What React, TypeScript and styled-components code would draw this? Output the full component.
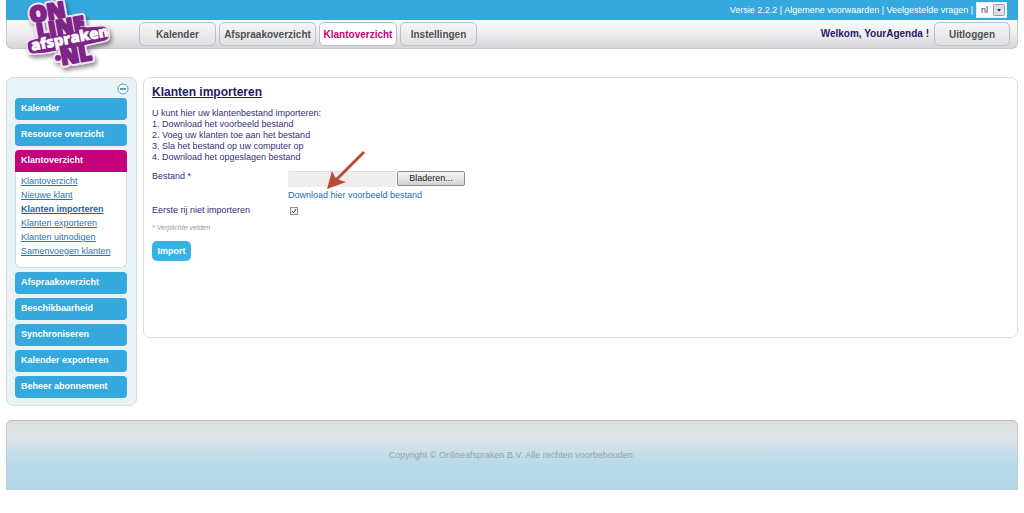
import React from "react";
import styled, { createGlobalStyle, css } from "styled-components";

const GlobalStyle = createGlobalStyle`
  *, *::before, *::after { box-sizing: border-box; }
  body {
    margin: 0;
    background: #fff;
    color: #343078;
    font-family: "Liberation Sans", Arial, Helvetica, sans-serif;
    font-size: 9px;
    line-height: 11px;
  }
  button, input, select { font-family: inherit; margin: 0; }
`;

const Page = styled.div`
  padding: 0 6px;
`;

const Header = styled.header`
  position: relative;
  margin-bottom: 28px;
`;

const TopBar = styled.div`
  display: flex;
  justify-content: flex-end;
  align-items: center;
  gap: 3px;
  height: 20px;
  padding-right: 11px;
  background: #35a9dd;
  color: #fff;
`;

const TopLinks = styled.div`
  white-space: pre;
`;

const TopLink = styled.a`
  color: inherit;
  text-decoration: none;
`;

const LanguageBox = styled.div`
  position: relative;
  display: flex;
`;

const LanguageSelect = styled.select`
  appearance: none;
  width: 31px;
  height: 16px;
  padding: 0 0 0 4px;
  border: 1px solid #e4eef4;
  border-radius: 0;
  background: #fff;
  color: #343078;
  font-size: 9px;
`;

const SelectArrow = styled.svg`
  position: absolute;
  right: 2px;
  top: 2px;
  pointer-events: none;
`;

const NavBar = styled.div`
  display: flex;
  align-items: flex-start;
  height: 29px;
  padding: 2px 7px 0 132px;
  border: 1px solid #c9cacc;
  border-top: 0;
  border-radius: 0 0 6px 6px;
  background: linear-gradient(#fafafb, #ededef 50%, #d5d6d8);
`;

const Nav = styled.nav`
  display: flex;
  gap: 3px;
  flex: 1;
`;

const barButton = css<{ $width: number; $active?: boolean }>`
  display: flex;
  align-items: center;
  justify-content: center;
  width: ${(p) => p.$width}px;
  height: 24px;
  padding: 0;
  border: 1px solid #bfc0c4;
  border-radius: 5px;
  background: ${(p) => (p.$active ? "#fff" : "linear-gradient(#f6f6f8, #dfe0e3)")};
  color: ${(p) => (p.$active ? "#c4007a" : "#505050")};
  font-size: 10px;
  font-weight: bold;
  text-decoration: none;
`;

const NavLink = styled.a`
  ${barButton}
`;

const LogoutButton = styled.button`
  ${barButton}
`;

const Welcome = styled.strong`
  margin-right: 5px;
  color: #1f1a66;
  font-size: 10px;
  line-height: 24px;
`;

const LogoLink = styled.a`
  position: absolute;
  left: 14px;
  top: 0;
`;

const Columns = styled.div`
  display: flex;
  align-items: flex-start;
  gap: 6px;
  margin-bottom: 14px;
`;

const Sidebar = styled.aside`
  flex: none;
  display: flex;
  flex-direction: column;
  width: 131px;
  padding: 5px 9px 3px 8px;
  border: 1px solid #d3dde0;
  border-radius: 7px;
  background: #e9f3f6;
`;

const CollapseButton = styled.button`
  align-self: flex-end;
  display: flex;
  margin-right: -2px;
  margin-bottom: 3px;
  padding: 0;
  border: 0;
  background: none;
`;

const MenuGroup = styled.div`
  margin-bottom: 4px;
`;

const MenuHead = styled.a<{ $active?: boolean }>`
  display: block;
  height: 22px;
  padding: 0 6px;
  border-radius: ${(p) => (p.$active ? "4px 4px 0 0" : "4px")};
  background: ${(p) => (p.$active ? "#c4007a" : "#35a9dd")};
  color: #fff;
  font-weight: bold;
  line-height: 21px;
  text-decoration: none;
`;

const SubMenu = styled.ul`
  height: 96px;
  margin: 0;
  padding: 2px 5px 0;
  border: 1px solid #d3dbe0;
  border-top: 0;
  border-radius: 0 0 6px 6px;
  background: #fff;
  list-style: none;
`;

const SubItem = styled.li`
  line-height: 14px;
  height: 14px;
`;

const SubLink = styled.a<{ $current?: boolean }>`
  color: ${(p) => (p.$current ? "#1763a6" : "#2d72b0")};
  font-weight: ${(p) => (p.$current ? "bold" : "normal")};
`;

const Main = styled.main`
  flex: 1;
  min-width: 0;
  min-height: 261px;
  padding: 8px;
  border: 1px solid #dcdfe2;
  border-radius: 7px;
  background: #fff;
`;

const Title = styled.h1`
  margin: 0 0 9px;
  color: #1f1a66;
  font-size: 12px;
  line-height: 13px;
  text-decoration: underline;
`;

const Intro = styled.div`
  margin-bottom: 8px;
`;

const Steps = styled.ol`
  margin: 0;
  padding: 0;
  list-style-position: inside;
`;

const Form = styled.form`
  display: grid;
  grid-template-columns: 136px 1fr;
  align-items: start;
`;

const FieldLabel = styled.label`
  line-height: 11px;
`;

const FileCell = styled.div`
  position: relative;
  margin-bottom: 4px;
`;

const FileRow = styled.div`
  display: flex;
  gap: 1px;
  margin-bottom: 3px;
`;

const FileName = styled.input`
  width: 108px;
  height: 16px;
  padding: 0 3px;
  border: 1px solid #eee;
  border-top-color: #ddd;
  background: #eeeeef;
  font-size: 9px;
`;

const BrowseButton = styled.button`
  width: 68px;
  height: 15px;
  padding: 0;
  border: 1px solid #8c8c8c;
  border-radius: 2px;
  background: linear-gradient(#f3f3f3, #e6e6e6 50%, #d2d2d2);
  color: #222;
  font-size: 9px;
  line-height: 13px;
`;

const DownloadLink = styled.a`
  color: #1a6fb5;
  text-decoration: none;
`;

const PointerArrow = styled.svg`
  position: absolute;
  left: 36px;
  top: -22px;
  pointer-events: none;
`;

const CheckCell = styled.div`
  position: relative;
  padding: 2px;
`;

const Check = styled.input`
  appearance: none;
  display: block;
  width: 8px;
  height: 8px;
  border: 1px solid #8f9399;
  background: #f3f4f6;

  &:not(:checked) + svg { display: none; }
`;

const CheckMark = styled.svg`
  position: absolute;
  left: 2px;
  top: 2px;
  pointer-events: none;
`;

const Required = styled.p`
  grid-column: 1 / -1;
  margin: 6px 0 8px;
  color: #999;
  font-size: 7px;
  font-style: italic;
  line-height: 10px;
`;

const ImportButton = styled.button`
  justify-self: start;
  width: 39px;
  height: 20px;
  padding: 0;
  border: 0;
  border-radius: 5px;
  background: #35b3e6;
  color: #fff;
  font-size: 9px;
  font-weight: bold;
`;

const Footer = styled.footer`
  height: 70px;
  border: 1px solid #c3cccf;
  border-top: 1px solid #b9bfc0;
  border-bottom-color: #b5d3de;
  border-radius: 6px 6px 0 0;
  background: linear-gradient(#dae0e0, #dde4e7 25%, #b9dbea 60%, #b5d9ec 80%, #b1d8e4);
  color: #96a2a8;
  line-height: 68px;
  text-align: center;
`;

const Logo = () => (
  <svg width="100" height="76" viewBox="20 0 100 76" role="img" aria-label="Onlineafspraken.nl">
    <defs>
      <filter id="shadow" x="-20%" y="-20%" width="150%" height="150%">
        <feDropShadow dx="2" dy="3" stdDeviation="2" floodColor="#000" floodOpacity="0.45" />
      </filter>
      <g id="words" fontFamily="'Open Sans', sans-serif" fontWeight="800" strokeLinejoin="round">
        <text x="31" y="23" fontSize="22" transform="rotate(-10 31 23)">ON</text>
        <text x="38" y="39" fontSize="21" transform="rotate(-10 38 39)">LINE</text>
        <text x="62" y="65" fontSize="22" transform="rotate(-10 62 65)">NL</text>
        <circle cx="58" cy="58" r="2" />
      </g>
      <path id="plate" d="M31 41L38 39L60 36L84 30L85 28L103 27Q106 27 107 30L108 37Q108 39 105 40L78 46L46 52L33 53Q30 53 29 50L28 44Q28 42 31 41Z" />
    </defs>
    <g filter="url(#shadow)" fill="#f3e0f5" stroke="#f3e0f5">
      <use href="#words" strokeWidth="6" />
      <use href="#plate" strokeWidth="4" />
    </g>
    <use href="#words" fill="#7d2586" stroke="#7d2586" strokeWidth="2" />
    <use href="#plate" fill="#7d2586" stroke="#7d2586" strokeWidth="1" />
    <text
      x="32"
      y="51"
      transform="rotate(-11 32 51)"
      fontFamily="'Open Sans', sans-serif"
      fontWeight="800"
      fontSize="15"
      fill="#fff"
      stroke="#fff"
      strokeWidth="0.6"
    >
      afspraken
    </text>
  </svg>
);

const navItems = [
  { label: "Kalender", width: 77 },
  { label: "Afspraakoverzicht", width: 97 },
  { label: "Klantoverzicht", width: 78, active: true },
  { label: "Instellingen", width: 77 },
];

const menu = [
  { label: "Kalender" },
  { label: "Resource overzicht" },
  {
    label: "Klantoverzicht",
    items: [
      "Klantoverzicht",
      "Nieuwe klant",
      "Klanten importeren",
      "Klanten exporteren",
      "Klanten uitnodigen",
      "Samenvoegen klanten",
    ],
  },
  { label: "Afspraakoverzicht" },
  { label: "Beschikbaarheid" },
  { label: "Synchroniseren" },
  { label: "Kalender exporteren" },
  { label: "Beheer abonnement" },
];

export default function App() {
  return (
    <Page>
      <GlobalStyle />
      <Header>
        <TopBar>
          <TopLinks>
            Versie 2.2.2 | <TopLink href="#voorwaarden">Algemene voorwaarden</TopLink> |{" "}
            <TopLink href="#vragen">Veelgestelde vragen</TopLink> |
          </TopLinks>
          <LanguageBox>
            <LanguageSelect aria-label="Taal" defaultValue="nl">
              <option value="nl">nl</option>
              <option value="en">en</option>
            </LanguageSelect>
            <SelectArrow width="12" height="12" viewBox="0 0 12 12">
              <rect x="0.5" y="0.5" width="11" height="11" rx="1" fill="#dcdfe3" stroke="#9a9ea5" />
              <path d="M4 5h4L6 7.500z" fill="#222" />
            </SelectArrow>
          </LanguageBox>
        </TopBar>
        <NavBar>
          <Nav>
            {navItems.map((n) => (
              <NavLink key={n.label} href="#" $width={n.width} $active={n.active}>
                {n.label}
              </NavLink>
            ))}
          </Nav>
          <Welcome>Welkom, YourAgenda !</Welcome>
          <LogoutButton type="button" $width={76}>
            Uitloggen
          </LogoutButton>
        </NavBar>
        <LogoLink href="#">
          <Logo />
        </LogoLink>
      </Header>

      <Columns>
        <Sidebar>
          <CollapseButton type="button" aria-label="Menu inklappen">
            <svg width="12" height="12" viewBox="0 0 12 12" fill="none" stroke="#5b9fbd">
              <circle cx="6" cy="6" r="5" fill="#f3fafc" />
              <path d="M3 6h6" strokeWidth="2" />
            </svg>
          </CollapseButton>
          {menu.map((m) => (
            <MenuGroup key={m.label}>
              <MenuHead href="#" $active={!!m.items}>
                {m.label}
              </MenuHead>
              {m.items && (
                <SubMenu>
                  {m.items.map((s) => (
                    <SubItem key={s}>
                      <SubLink href="#" $current={s === "Klanten importeren"}>
                        {s}
                      </SubLink>
                    </SubItem>
                  ))}
                </SubMenu>
              )}
            </MenuGroup>
          ))}
        </Sidebar>

        <Main>
          <Title>Klanten importeren</Title>
          <Intro>
            U kunt hier uw klantenbestand importeren:
            <Steps>
              <li>Download het voorbeeld bestand</li>
              <li>Voeg uw klanten toe aan het bestand</li>
              <li>Sla het bestand op uw computer op</li>
              <li>Download het opgeslagen bestand</li>
            </Steps>
          </Intro>
          <Form onSubmit={(e) => e.preventDefault()}>
            <FieldLabel htmlFor="bestand">Bestand *</FieldLabel>
            <FileCell>
              <FileRow>
                <FileName id="bestand" type="text" readOnly />
                <BrowseButton type="button">Bladeren...</BrowseButton>
              </FileRow>
              <DownloadLink href="#voorbeeld">Download hier voorbeeld bestand</DownloadLink>
              <PointerArrow width="44" height="44" viewBox="0 0 44 44">
                <path d="M40 3L12 31" stroke="#bb4a33" strokeWidth="3" />
                <path d="M3 40L8 22L12 30L22 33Z" fill="#bb4a33" />
              </PointerArrow>
            </FileCell>
            <FieldLabel htmlFor="eerste-rij">Eerste rij niet importeren</FieldLabel>
            <CheckCell>
              <Check id="eerste-rij" type="checkbox" defaultChecked />
              <CheckMark width="8" height="8" viewBox="0 0 8 8" fill="none">
                <path d="M2 4l1.500 2L6 2" stroke="#3c4568" />
              </CheckMark>
            </CheckCell>
            <Required>* Verplichte velden</Required>
            <ImportButton type="submit">Import</ImportButton>
          </Form>
        </Main>
      </Columns>

      <Footer>Copyright © Onlineafspraken B.V. Alle rechten voorbehouden.</Footer>
    </Page>
  );
}
